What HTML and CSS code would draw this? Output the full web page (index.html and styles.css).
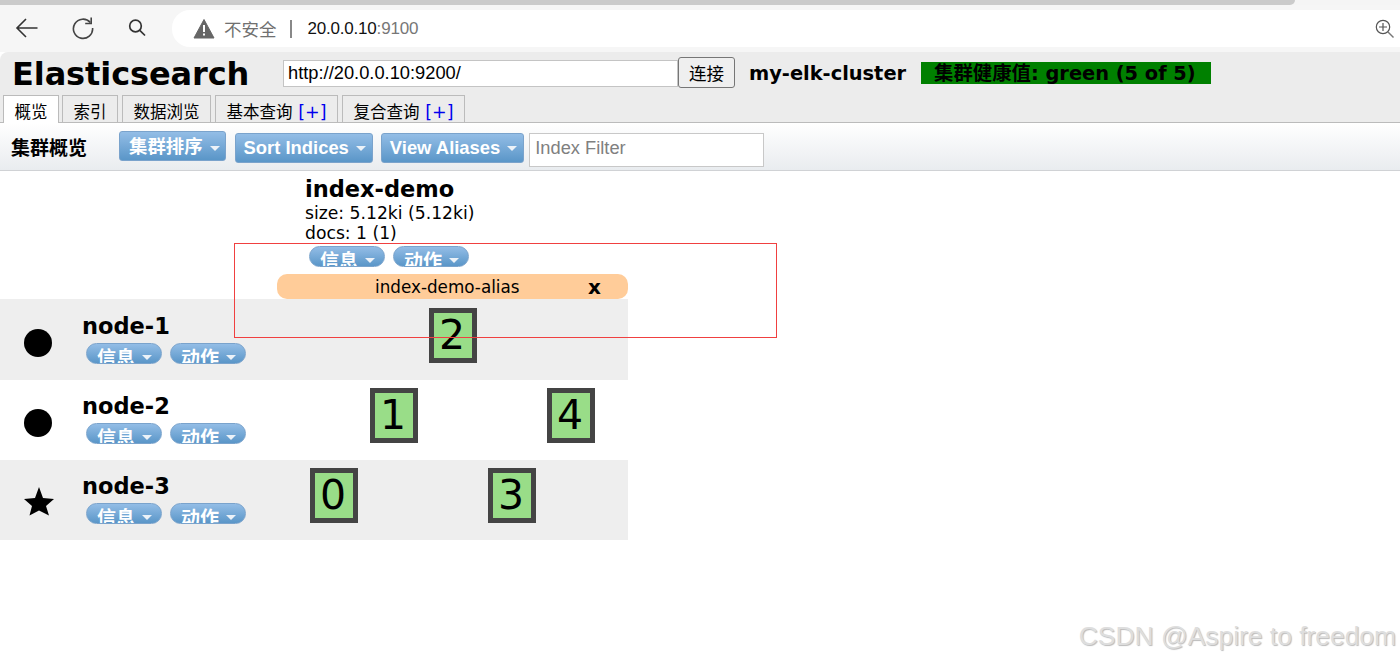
FILE: index.html

```html
<!DOCTYPE html>
<html lang="zh-CN">
<head>
  <meta charset="UTF-8" />
  <title>Elasticsearch</title>
  <link rel="stylesheet" href="styles.css">
</head>
<body>

<div class="scrollstrip"><div class="scrollthumb"></div></div>

<div class="browser-bar">
  <svg class="nav-icon back" width="24" height="24" viewBox="0 0 24 24"><path d="M22.500 12H2.500M11 3l-9 9 9 9" fill="none" stroke="#333" stroke-width="1.6"/></svg>
  <svg class="nav-icon reload" width="24" height="24" viewBox="0 0 24 24"><path d="M19.300 6.500A9.600 9.600 0 1 0 21.600 12" fill="none" stroke="#444" stroke-width="1.6"/><path d="M20.200 1.500v6h-6" fill="none" stroke="#444" stroke-width="1.6"/></svg>
  <svg class="nav-icon search" width="20" height="20" viewBox="0 0 20 20"><circle cx="8.500" cy="8" r="5.800" fill="none" stroke="#333" stroke-width="1.7"/><path d="M12.800 12.300l5.200 5.200" stroke="#333" stroke-width="1.7"/></svg>
  <div class="address">
    <svg class="warn" width="22" height="20" viewBox="0 0 22 20"><path d="M11 .5L21 19H1z" fill="#666" stroke="#666" stroke-linejoin="round"/><path d="M10 6h2v7h-2zM10 14.500h2v2h-2z" fill="#fff"/></svg>
    <span class="insecure">不安全</span>
    <span class="sep"></span>
    <span class="host">20.0.0.10<span class="port">:9100</span></span>
    <svg class="zoom-icon" width="20" height="20" viewBox="0 0 20 20"><circle cx="8" cy="8" r="6.700" fill="none" stroke="#555" stroke-width="1.2"/><path d="M8 4v8M4 8h8" stroke="#555" stroke-width="1.2"/><path d="M13 13l5.500 5.500" stroke="#777" stroke-width="1.4"/></svg>
  </div>
</div>

<div class="page">
  <div class="app-header">
    <div class="header-row">
      <h1 class="app-title">Elasticsearch</h1>
      <input class="base-uri" type="text" value="http://20.0.0.10:9200/" />
      <button class="connect">连接</button>
      <span class="cluster-name">my-elk-cluster</span>
      <span class="cluster-health">集群健康值: green (5 of 5)</span>
    </div>
    <div class="tabs">
      <div class="tab active">概览</div>
      <div class="tab">索引</div>
      <div class="tab">数据浏览</div>
      <div class="tab">基本查询 <span class="plus">[+]</span></div>
      <div class="tab">复合查询 <span class="plus">[+]</span></div>
    </div>
  </div>

  <div class="toolbar">
    <span class="toolbar-label">集群概览</span>
    <div class="menu-btn first">集群排序<i class="caret"></i></div>
    <div class="menu-btn">Sort Indices<i class="caret"></i></div>
    <div class="menu-btn">View Aliases<i class="caret"></i></div>
    <input class="index-filter" type="text" placeholder="Index Filter" />
  </div>

  <div class="overview">
    <div class="index-head">
      <h2 class="index-name">index-demo</h2>
      <div class="index-stat">size: 5.12ki (5.12ki)</div>
      <div class="index-stat">docs: 1 (1)</div>
      <div class="pill-row">
        <div class="pill">信息<i class="caret"></i></div>
        <div class="pill">动作<i class="caret"></i></div>
      </div>
    </div>
    <div class="alias-row"><span class="alias-name">index-demo-alias</span><b class="alias-x">x</b></div>

    <div class="node-row shaded tall">
      <div class="node-icon"><span class="dot"></span></div>
      <div class="node-info">
        <h3 class="node-name">node-1</h3>
        <div class="pill-row">
          <div class="pill">信息<i class="caret"></i></div>
          <div class="pill">动作<i class="caret"></i></div>
        </div>
      </div>
      <div class="shards">
        <div class="slot"></div><div class="slot"></div>
        <div class="slot"><div class="shard">2</div></div>
      </div>
    </div>

    <div class="node-row">
      <div class="node-icon"><span class="dot"></span></div>
      <div class="node-info">
        <h3 class="node-name">node-2</h3>
        <div class="pill-row">
          <div class="pill">信息<i class="caret"></i></div>
          <div class="pill">动作<i class="caret"></i></div>
        </div>
      </div>
      <div class="shards">
        <div class="slot"></div>
        <div class="slot"><div class="shard">1</div></div>
        <div class="slot"></div><div class="slot"></div>
        <div class="slot"><div class="shard">4</div></div>
      </div>
    </div>

    <div class="node-row shaded">
      <div class="node-icon">
        <svg class="star" width="30" height="29" viewBox="0 0 30 29"><path d="M15 0l4 11 11 1-8 7 3 9.500-10-5-9.500 5L8 19l-8-7 11-1z" fill="#000"/></svg>
      </div>
      <div class="node-info">
        <h3 class="node-name">node-3</h3>
        <div class="pill-row">
          <div class="pill">信息<i class="caret"></i></div>
          <div class="pill">动作<i class="caret"></i></div>
        </div>
      </div>
      <div class="shards">
        <div class="slot"><div class="shard">0</div></div>
        <div class="slot"></div><div class="slot"></div>
        <div class="slot"><div class="shard">3</div></div>
      </div>
    </div>
  </div>
</div>

<div class="red-box"></div>
<div class="watermark">CSDN @Aspire to freedom</div>

</body>
</html>
```

FILE: styles.css

```css
body {
  margin: 0;
  background: #fff;
  font-family: "Liberation Sans", "Noto Sans CJK SC", sans-serif;
  color: #000;
  overflow: hidden;
  height: 663px;
}
h1, h2, h3 {
  margin: 0;
}
.scrollstrip {
  height: 5px;
  background: #f5f5f5;
}
.scrollthumb {
  width: 1295px;
  height: 5px;
  background: #cbcbcb;
  border-bottom-right-radius: 5px;
}
.browser-bar {
  height: 47px;
  background: #f6f6f6;
  display: flex;
  align-items: flex-start;
  box-sizing: border-box;
  padding-top: 5px;
}
.nav-icon {
  flex: none;
  margin-top: 6px;
}
.back {
  margin-left: 15px;
}
.reload {
  margin-left: 32px;
}
.search {
  margin-left: 32px;
  margin-top: 8px;
}
.address {
  margin-left: 25px;
  flex: 1;
  height: 37px;
  background: #fff;
  border-radius: 18px 0 0 18px;
  display: flex;
  align-items: center;
  padding-left: 21px;
  font-size: 17px;
}
.warn {
  flex: none;
}
.insecure {
  margin-left: 9px;
  color: #707070;
  font-size: 17.500px;
}
.sep {
  width: 2px;
  height: 18px;
  background: #888;
  margin: 0 16px 0 13px;
}
.host {
  color: #111;
  font-size: 17px;
  letter-spacing: -0.2px;
}
.port {
  color: #777;
}
.zoom-icon {
  margin-left: auto;
  margin-right: 5px;
}

.page {
  background: #fff;
}
.app-header {
  height: 70px;
  background: #ececec;
  border-bottom: 1px solid #bbb;
  border-top-left-radius: 8px;
  display: flex;
  flex-direction: column;
  justify-content: space-between;
}
.header-row {
  display: flex;
  align-items: center;
  height: 41px;
  padding-left: 12px;
}
.app-title {
  font-family: "DejaVu Sans", sans-serif;
  font-size: 32px;
  font-weight: bold;
  width: 271px;
  margin-top: 2px;
  white-space: nowrap;
  letter-spacing: -0.1px;
}
.base-uri {
  width: 395px;
  height: 27px;
  box-sizing: border-box;
  border: 1px solid #c4c4c4;
  background: #fff;
  padding: 0 4px;
  margin: 1px 0 0;
  font-family: "Liberation Sans", sans-serif;
  font-size: 18.300px;
}
.connect {
  width: 57px;
  height: 31px;
  padding: 0;
  margin-right: 14px;
  background: #efefef;
  border: 1px solid #767676;
  border-radius: 3px;
  font-family: "Noto Sans CJK SC", sans-serif;
  font-size: 17.500px;
}
.cluster-name {
  font-family: "DejaVu Sans", sans-serif;
  font-size: 19.400px;
  font-weight: bold;
  width: 172px;
  margin-top: 2px;
  white-space: nowrap;
}
.cluster-health {
  width: 290px;
  height: 22px;
  box-sizing: border-box;
  margin-top: 1px;
  padding-left: 13px;
  background: #008000;
  font-family: "DejaVu Sans", "Noto Sans CJK SC", sans-serif;
  font-size: 19.400px;
  font-weight: bold;
  line-height: 24px;
  white-space: nowrap;
}
.tabs {
  display: flex;
  gap: 4px;
  padding-left: 3px;
  height: 27px;
}
.tab {
  height: 27px;
  box-sizing: border-box;
  padding: 4px 10.500px 0;
  border: 1px solid #bbb;
  border-bottom: none;
  background: #ececec;
  font-family: "Noto Sans CJK SC", sans-serif;
  font-size: 16.500px;
  line-height: 22px;
  white-space: nowrap;
}
.tab.active {
  background: #fff;
  height: 28px;
  margin-right: -1px;
}
.plus {
  color: #0000ee;
  margin-left: 2px;
  font-family: "DejaVu Sans", sans-serif;
  font-size: 17.500px;
}
.toolbar {
  height: 48px;
  box-sizing: border-box;
  background: linear-gradient(#fff, #e9ecef);
  border-bottom: 1px solid #d0d2d5;
  display: flex;
  align-items: center;
  padding-left: 11px;
}
.toolbar-label {
  width: 108px;
  font-family: "Noto Sans CJK SC", sans-serif;
  font-size: 19px;
  font-weight: bold;
}
.menu-btn {
  height: 30px;
  box-sizing: border-box;
  margin-top: 2px;
  margin-right: 8px;
  padding: 0 6px 0 8px;
  background: linear-gradient(#93bde6, #5a96c8);
  border: 1px solid #7aa3cc;
  border-radius: 3px;
  color: #fff;
  font-family: "Liberation Sans", "Noto Sans CJK SC", sans-serif;
  font-size: 18.400px;
  font-weight: bold;
  line-height: 28px;
  white-space: nowrap;
  display: flex;
  align-items: center;
}
.menu-btn.first {
  margin-top: -2px;
  margin-right: 9px;
  padding: 3px 5px 0 9px;
}
.caret {
  display: inline-block;
  width: 0;
  height: 0;
  margin-left: 7px;
  margin-top: 2px;
  border-left: 5px solid transparent;
  border-right: 5px solid transparent;
  border-top: 5px solid #ecf2f8;
}
.index-filter {
  width: 235px;
  height: 34px;
  box-sizing: border-box;
  margin: 6px 0 0 -3px;
  border: 1px solid #c8c8c8;
  background: #fff;
  padding: 0 5px 3px;
  font-family: "Liberation Sans", sans-serif;
  font-size: 18.300px;
}
.index-filter::placeholder {
  color: #808080;
}

.overview {
  width: 628px;
}
.index-head {
  height: 103px;
  box-sizing: border-box;
  padding: 4px 0 0 305px;
}
.index-name {
  font-family: "DejaVu Sans", sans-serif;
  font-size: 22.500px;
  font-weight: bold;
  line-height: 28px;
}
.index-stat {
  font-family: "DejaVu Sans", sans-serif;
  font-size: 17.200px;
  line-height: 20px;
  white-space: nowrap;
}
.pill-row {
  display: flex;
  gap: 8px;
  margin-left: 4px;
  margin-top: 3px;
}
.pill {
  width: 76px;
  height: 21px;
  box-sizing: border-box;
  border: 1px solid #7aa3cc;
  border-radius: 11px;
  background: linear-gradient(#93bde6, #5a96c8);
  color: #fff;
  font-family: "Noto Sans CJK SC", sans-serif;
  font-size: 19px;
  font-weight: bold;
  line-height: 25px;
  padding-left: 10px;
  overflow: hidden;
  white-space: nowrap;
  display: flex;
  align-items: flex-start;
}
.pill .caret {
  margin-left: 7px;
  margin-top: 11px;
  flex: none;
}
.alias-row {
  height: 25px;
  margin-left: 277px;
  background: #fc9;
  border-radius: 10px;
  display: flex;
  align-items: center;
  font-family: "DejaVu Sans", sans-serif;
  font-size: 16.800px;
}
.alias-name {
  margin-left: 98px;
}
.alias-x {
  margin-left: auto;
  margin-right: 27px;
  font-size: 20px;
}
.node-row {
  height: 80px;
  display: flex;
}
.node-row.tall {
  height: 81px;
}
.node-row + .node-row > * {
  margin-top: -1px;
}
.node-row.shaded {
  background: #eee;
}
.node-icon {
  width: 82px;
  flex: none;
  box-sizing: border-box;
  padding: 29px 0 0 24px;
}
.dot {
  display: block;
  width: 28px;
  height: 28px;
  margin-top: 1px;
  border-radius: 50%;
  background: #000;
}
.star {
  display: block;
  margin-top: -1px;
}
.node-info {
  width: 223px;
  flex: none;
  box-sizing: border-box;
  padding-top: 14px;
}
.node-name {
  font-family: "DejaVu Sans", sans-serif;
  font-size: 22.500px;
  font-weight: bold;
  line-height: 26px;
}
.node-info .pill-row {
  margin-top: 4px;
}
.shards {
  display: flex;
  padding-top: 9px;
}
.slot {
  width: 59px;
  flex: none;
  padding-left: 5px;
  box-sizing: border-box;
}
.slot:first-child {
  width: 60px;
}
.shard {
  width: 48px;
  height: 55px;
  box-sizing: border-box;
  border: 5px solid #444;
  padding-right: 2px;
  background: #9d8;
  font-family: "DejaVu Sans", sans-serif;
  font-size: 41px;
  line-height: 45px;
  text-align: center;
}

.red-box {
  position: absolute;
  left: 234px;
  top: 243px;
  width: 541px;
  height: 93px;
  border: 1px solid #f04040;
}
.watermark {
  position: absolute;
  right: 4px;
  top: 621px;
  font-family: "Liberation Sans", sans-serif;
  font-size: 26.400px;
  color: #dedede;
  text-shadow: 1px 1px 1px #bbb;
  white-space: nowrap;
}
```
